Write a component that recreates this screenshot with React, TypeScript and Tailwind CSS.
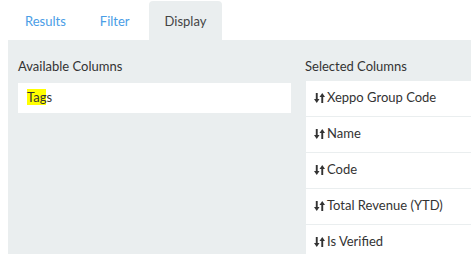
import React from "react";

function SortIcon() {
  return (
    <svg width="11" height="12" viewBox="0 0 11 12" className="shrink-0" fill="#333">
      <rect x="1.8" y="1" width="1.9" height="7" />
      <polygon points="0,7 5.5,7 2.75,11" />
      <rect x="7.3" y="4" width="1.9" height="7" />
      <polygon points="5.5,5 11,5 8.25,1" />
    </svg>
  );
}

export default function App() {
  const selected = ["Xeppo Group Code", "Name", "Code", "Total Revenue (YTD)", "Is Verified"];
  return (
    <div
      className="w-[471px] h-[254px] overflow-hidden bg-white text-[13px] text-[#333]"
      style={{ fontFamily: "Lato, 'Liberation Sans', sans-serif" }}
    >
      <div className="flex pl-[9px] pt-[1px] leading-[18.57px]">
        <div className="px-[16px] pt-[11px] pb-[9px] mr-[2px] text-[#4a9de6]">Results</div>
        <div className="px-[16px] pt-[11px] pb-[9px] mr-[3px] text-[#4a9de6]">Filter</div>
        <div className="px-[16px] pt-[11px] pb-[9px] rounded-t-[4px] bg-[#eaeeef] text-[#444]">Display</div>
      </div>
      <div className="ml-[8px] w-[600px] h-[300px] bg-[#eaeeef] flex pl-[10px] pt-[17px] gap-[15px]">
        <div className="w-[273px] shrink-0">
          <div className="h-[19px] leading-[19px]">Available Columns</div>
          <div className="mt-[7px] h-[30px] bg-white flex items-center pl-[9px]">
            <span>
              <mark className="bg-[#ffff00] text-[#333]">Tag</mark>s
            </span>
          </div>
        </div>
        <div className="flex-1">
          <div className="h-[19px] leading-[19px] -ml-px">Selected Columns</div>
          <div className="mt-[5px] flex flex-col gap-[1px]">
            {selected.map((s) => (
              <div key={s} className="h-[35px] bg-white flex items-center pl-[8px] gap-[2px]">
                <SortIcon />
                <span>{s}</span>
              </div>
            ))}
          </div>
        </div>
      </div>
    </div>
  );
}
